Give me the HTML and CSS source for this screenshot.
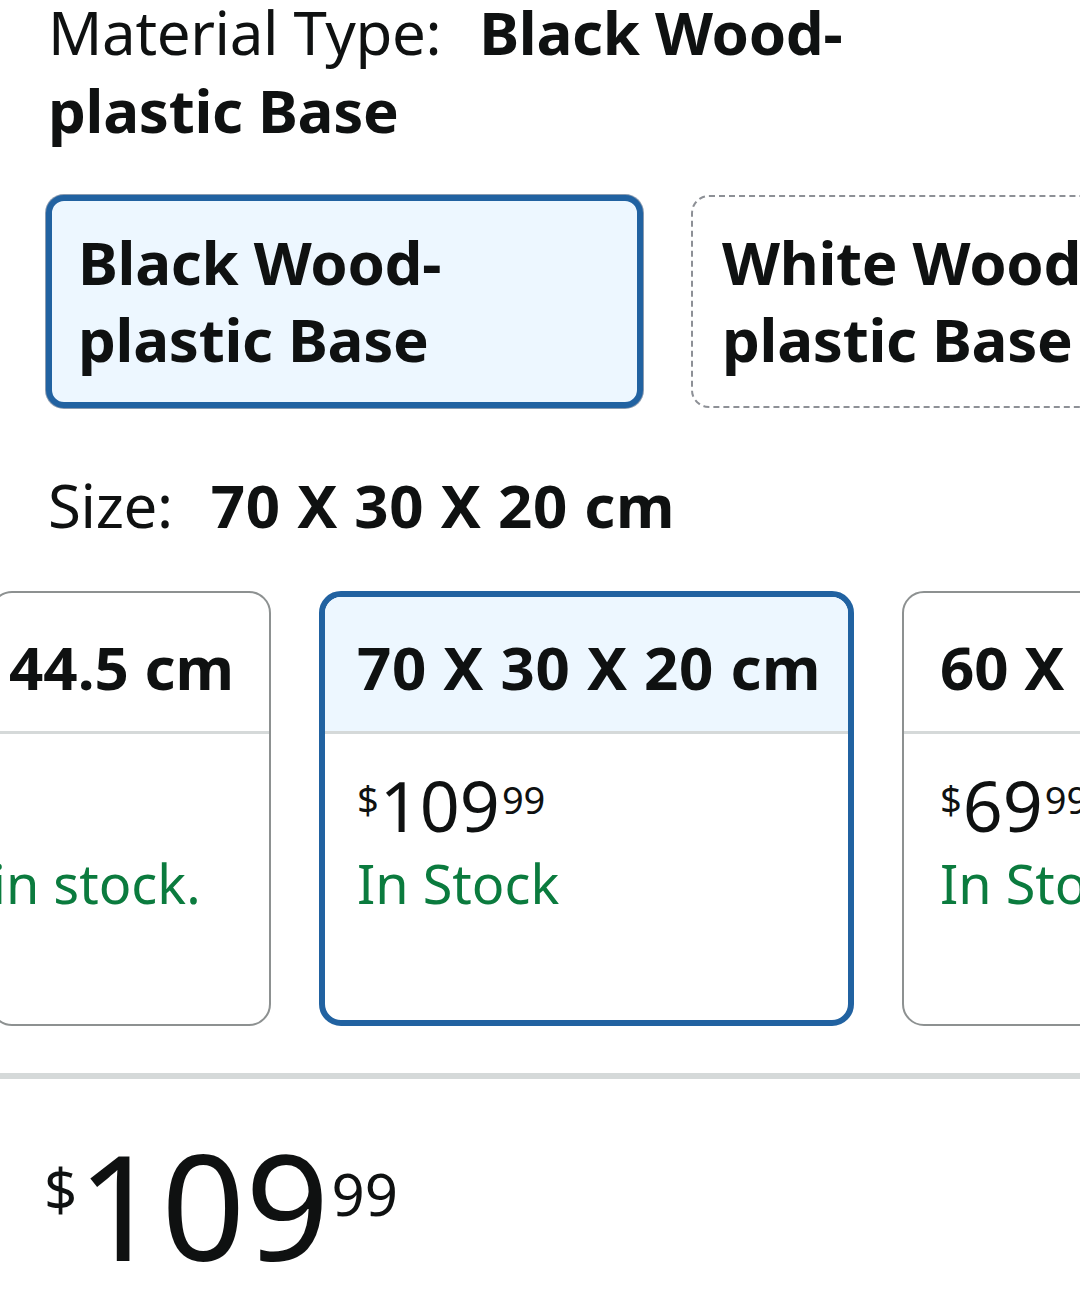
FILE: index.html
```html
<!DOCTYPE html>
<html lang="en">
<head>
<meta charset="utf-8">
<title>Product variations</title>
<link rel="stylesheet" href="styles.css">
</head>
<body>
<div class="page">
  <section class="variation">
    <div class="title"><span class="label">Material Type:</span><span class="value">Black Wood-plastic Base</span></div>
    <div class="swatches">
      <div class="swatch selected">Black Wood-plastic Base</div>
      <div class="swatch unavailable">White Wood-plastic Base</div>
    </div>
  </section>

  <section class="variation size">
    <div class="title"><span class="label">Size:</span><span class="value num">70 X 30 X 20 cm</span></div>
    <div class="cards">
      <div class="card first">
        <div class="card-head">44.5 cm</div>
        <div class="card-body">
          <div class="price small empty"></div>
          <div class="stock">in stock.</div>
        </div>
      </div>
      <div class="card selected">
        <div class="card-head num">70 X 30 X 20 cm</div>
        <div class="card-body">
          <div class="price small"><span class="sym">$</span><span class="whole">109</span><span class="frac">99</span></div>
          <div class="stock">In Stock</div>
        </div>
      </div>
      <div class="card">
        <div class="card-head">60 X</div>
        <div class="card-body">
          <div class="price small"><span class="sym">$</span><span class="whole">69</span><span class="frac">99</span></div>
          <div class="stock">In Stock</div>
        </div>
      </div>
    </div>
  </section>

  <div class="rule"></div>

  <div class="price big"><span class="sym">$</span><span class="whole">109</span><span class="frac">99</span></div>
</div>
</body>
</html>
```

FILE: styles.css
```css
html, body {
  margin: 0;
  padding: 0;
  background: #ffffff;
}

body {
  width: 1080px;
  height: 1307px;
  overflow: hidden;
  font-family: "Noto Sans", "Open Sans", sans-serif;
  color: #0f1111;
}

.page {
  padding-left: 48px;
  margin-top: -7px;
}

.title {
  font-size: 60px;
  line-height: 78px;
  padding-right: 80px;
}

.title .label {
  font-weight: 400;
  margin-right: 38px;
  letter-spacing: -0.35px;
}

.title .value {
  font-weight: 700;
  letter-spacing: -0.3px;
}

.title .value.num,
.card-head.num {
  letter-spacing: 0.7px;
}

/* material swatches */
.swatches {
  display: flex;
  gap: 48px;
  margin-top: 46px;
  margin-left: -2px;
}

.swatch {
  flex: 0 0 597px;
  box-sizing: border-box;
  height: 213px;
  border-radius: 18px;
  padding: 23px 26px;
  font-size: 60px;
  font-weight: 700;
  line-height: 77px;
  letter-spacing: -0.3px;
}

.swatch.selected {
  border: 6px solid #2162a1;
  background: #edf7ff;
  box-shadow: 0 0 0 1px #8a9bb0;
}

.swatch.unavailable {
  border: 2px dashed #8d9096;
  padding: 27px 29px;
}

/* size */
.size .title {
  margin-top: 58px;
}

.cards {
  display: flex;
  gap: 48px;
  margin-top: 47px;
  margin-left: -58px;
}

.card {
  flex: 0 0 535px;
  box-sizing: border-box;
  height: 435px;
  border: 2px solid #8d9191;
  border-radius: 22px;
  overflow: hidden;
  --pad: 36px;
}

.card.first {
  flex-basis: 281px;
  --pad: 17px;
}

.card.selected {
  border: 6px solid #2162a1;
  --pad: 32px;
}

.card-head {
  font-size: 60px;
  font-weight: 700;
  line-height: 78px;
  padding: 35px var(--pad) 25px;
  border-bottom: 3px solid #d5d9d9;
  white-space: nowrap;
}

.card.selected .card-head {
  padding-top: 31px;
  background: #edf7ff;
}

.card-body {
  padding: 36px var(--pad) 0;
}

.card.first .card-body {
  padding-left: 0;
}

.price {
  display: flex;
  align-items: flex-start;
  line-height: 1;
  white-space: nowrap;
}

.price.small {
  height: 70px;
}

.price.small .sym {
  font-size: 38px;
  margin-top: 10px;
  margin-right: 1px;
}

.price.small .whole {
  font-size: 70px;
}

.price.small .frac {
  font-size: 38px;
  margin-top: 10px;
  margin-left: 2px;
}

.stock {
  margin-top: 10px;
  font-size: 54px;
  line-height: 66px;
  color: #0b7b3e;
  white-space: nowrap;
}

/* divider */
.rule {
  height: 6px;
  background: #d5d9d9;
  margin: 47px 0 0 -48px;
  width: 1080px;
}

/* big price */
.price.big {
  margin-top: 52px;
  margin-left: -4px;
}

.price.big .sym {
  font-size: 58px;
  margin-top: 29px;
  margin-right: 0;
}

.price.big .whole {
  font-size: 147px;
}

.price.big .frac {
  font-size: 58px;
  margin-top: 34px;
  margin-left: 2px;
}
```
